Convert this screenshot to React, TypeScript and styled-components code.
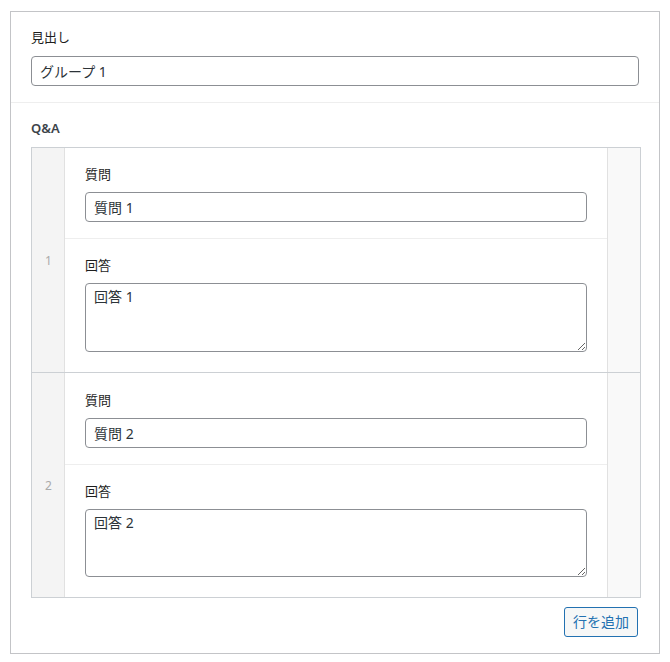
import React from "react";
import styled, { createGlobalStyle } from "styled-components";

const GlobalStyle = createGlobalStyle`
  html, body {
    margin: 0;
    padding: 0;
    background: #fff;
  }
  body {
    font-family: "Noto Sans", "Noto Sans CJK JP", sans-serif;
    color: #1e1e1e;
  }
  * { box-sizing: border-box; }
`;

const Page = styled.div`
  padding: 11px 0 0 10px;
`;

const Box = styled.div`
  width: 650px;
  height: 643px;
  border: 1px solid #c3c4c7;
  background: #fff;
`;

const Field = styled.div<{ $divider?: boolean }>`
  padding: 16px 20px 16px 20px;
  border-top: ${({ $divider }) => ($divider ? "1px solid #eeeeee" : "none")};
`;

const Label = styled.div<{ $bold?: boolean; $gap?: number }>`
  font-size: 13px;
  line-height: 18px;
  height: 18px;
  font-weight: ${({ $bold }) => ($bold ? 600 : 400)};
  color: ${({ $bold }) => ($bold ? "#3c434a" : "#1e1e1e")};
  margin-bottom: ${({ $gap }) => $gap ?? 10}px;
`;

const TextInput = styled.input`
  display: block;
  width: 100%;
  height: 30px;
  border: 1px solid #8c8f94;
  border-radius: 4px;
  padding: 0 8px;
  font-family: inherit;
  font-size: 14px;
  color: #2c3338;
  background: #fff;
  outline: none;
`;

const TextArea = styled.textarea<{ $h: number }>`
  display: block;
  width: 100%;
  height: ${({ $h }) => $h}px;
  border: 1px solid #8c8f94;
  border-radius: 4px;
  padding: 3px 8px;
  font-family: inherit;
  font-size: 14px;
  line-height: 20px;
  color: #2c3338;
  background: #fff;
  resize: vertical;
  outline: none;
`;

const Table = styled.div`
  border: 1px solid #ccd0d4;
  width: 610px;
`;

const Row = styled.div<{ $last?: boolean }>`
  display: grid;
  grid-template-columns: 33px 1fr 33px;
  border-bottom: ${({ $last }) => ($last ? "none" : "1px solid #ccd0d4")};
`;

const OrderCell = styled.div`
  background: #f4f4f4;
  border-right: 1px solid #e1e1e1;
  display: flex;
  align-items: center;
  justify-content: center;
  font-size: 12px;
  color: #aaaaaa;
  padding-left: 1px;
`;

const FieldsCell = styled.div`
  display: flex;
  flex-direction: column;
`;

const SubField = styled.div<{ $top: number; $bottom: number }>`
  padding: ${({ $top }) => $top}px 20px ${({ $bottom }) => $bottom}px 20px;
  & + & {
    border-top: 1px solid #eeeeee;
  }
`;

const RemoveCell = styled.div`
  background: #f9f9f9;
  border-left: 1px solid #e1e1e1;
`;

const Actions = styled.div`
  display: flex;
  justify-content: flex-end;
  margin-top: 9px;
  padding-right: 1px;
`;

const AddButton = styled.button`
  height: 30px;
  padding: 0 8px;
  border: 1px solid #2271b1;
  border-radius: 3px;
  background: #f6f7f7;
  color: #2271b1;
  font-family: inherit;
  font-size: 14px;
  line-height: 28px;
  cursor: pointer;
`;

const rows = [
  { q: "質問 1", a: "回答 1", top: 17, ah: 69 },
  { q: "質問 2", a: "回答 2", top: 18, ah: 68 },
];

export default function App() {
  return (
    <Page>
      <GlobalStyle />
      <Box>
        <Field>
          <Label>見出し</Label>
          <TextInput defaultValue="グループ 1" />
        </Field>
        <Field $divider>
          <Label $bold $gap={10}>Q&amp;A</Label>
          <Table>
            {rows.map((r, i) => (
              <Row key={i} $last={i === rows.length - 1}>
                <OrderCell>{i + 1}</OrderCell>
                <FieldsCell>
                  <SubField $top={r.top} $bottom={16}>
                    <Label $gap={9}>質問</Label>
                    <TextInput defaultValue={r.q} />
                  </SubField>
                  <SubField $top={17} $bottom={20}>
                    <Label $gap={9}>回答</Label>
                    <TextArea $h={r.ah} defaultValue={r.a} />
                  </SubField>
                </FieldsCell>
                <RemoveCell />
              </Row>
            ))}
          </Table>
          <Actions>
            <AddButton>行を追加</AddButton>
          </Actions>
        </Field>
      </Box>
    </Page>
  );
}
